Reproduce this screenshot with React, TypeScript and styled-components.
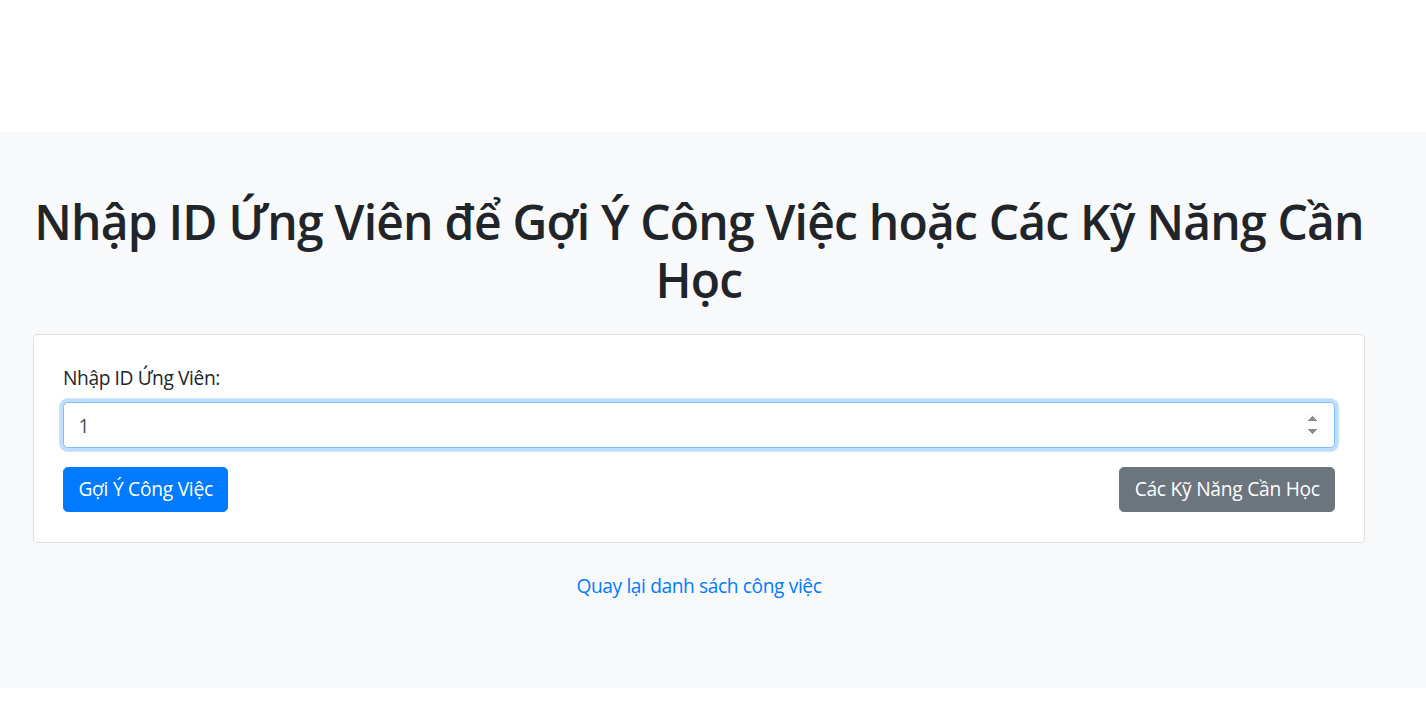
import React from "react";
import styled, { createGlobalStyle } from "styled-components";

const GlobalStyle = createGlobalStyle`
  *, *::before, *::after { box-sizing: border-box; }
  body {
    margin: 0;
    background: #fff;
    font-family: "Open Sans", "Noto Sans", sans-serif;
    font-size: 19.2px;
    line-height: 28.8px;
    color: #212529;
  }
`;

const TopBar = styled.header`
  height: 132px;
  background: #fff;
`;

const Section = styled.main`
  background: #f8f9fa;
  padding: 61px 0 87px;
`;

const Container = styled.div`
  width: 1332px;
  margin-left: 33px;
`;

const Title = styled.h1`
  margin: 0 0 26px;
  font-size: 48px;
  line-height: 57.6px;
  font-weight: 600;
  text-align: center;
  letter-spacing: -0.8px;
  color: #212529;
`;

const Card = styled.form`
  background: #fff;
  border: 1px solid rgba(0, 0, 0, 0.125);
  border-radius: 4.8px;
  padding: 28.8px 28.8px 29.8px 29px;
`;

const FormGroup = styled.div`
  margin-bottom: 19.2px;
`;

const Label = styled.label`
  display: block;
  margin-bottom: 9.6px;
  font-size: 19.2px;
  line-height: 28.8px;
  letter-spacing: -0.4px;
`;

const NumberInput = styled.input`
  display: block;
  width: 100%;
  height: 45.6px;
  padding: 7.2px 14.4px;
  font-family: inherit;
  font-size: 19.2px;
  line-height: 28.8px;
  color: #495057;
  background: #fff;
  border: 1.2px solid #80bdff;
  border-radius: 4.8px;
  box-shadow: 0 0 0 3.84px rgba(0, 123, 255, 0.25);
  outline: none;

  &::-webkit-inner-spin-button {
    opacity: 1;
  }
`;

const ButtonRow = styled.div`
  display: flex;
  justify-content: space-between;
  align-items: center;
`;

const Button = styled.button<{ $variant: "primary" | "secondary" }>`
  font-family: inherit;
  font-size: 19.2px;
  line-height: 28.8px;
  font-weight: 400;
  letter-spacing: -0.25px;
  padding: 7.2px 14.4px;
  border-radius: 4.8px;
  color: #fff;
  cursor: pointer;
  background: ${(p) => (p.$variant === "primary" ? "#007bff" : "#6c757d")};
  border: 1.2px solid ${(p) => (p.$variant === "primary" ? "#007bff" : "#6c757d")};
`;

const BackLink = styled.a`
  display: block;
  margin-top: 28.8px;
  text-align: center;
  color: #007bff;
  text-decoration: none;
  font-size: 19.2px;
  line-height: 28.8px;
  letter-spacing: -0.4px;
`;

export default function App() {
  return (
    <>
      <GlobalStyle />
      <TopBar />
      <Section>
        <Container>
          <Title>Nhập ID Ứng Viên để Gợi Ý Công Việc hoặc Các Kỹ Năng Cần Học</Title>
          <Card onSubmit={(e) => e.preventDefault()}>
            <FormGroup>
              <Label htmlFor="candidateId">Nhập ID Ứng Viên:</Label>
              <NumberInput id="candidateId" type="number" defaultValue={1} />
            </FormGroup>
            <ButtonRow>
              <Button type="button" $variant="primary">Gợi Ý Công Việc</Button>
              <Button type="button" $variant="secondary">Các Kỹ Năng Cần Học</Button>
            </ButtonRow>
          </Card>
          <BackLink href="#">Quay lại danh sách công việc</BackLink>
        </Container>
      </Section>
    </>
  );
}
